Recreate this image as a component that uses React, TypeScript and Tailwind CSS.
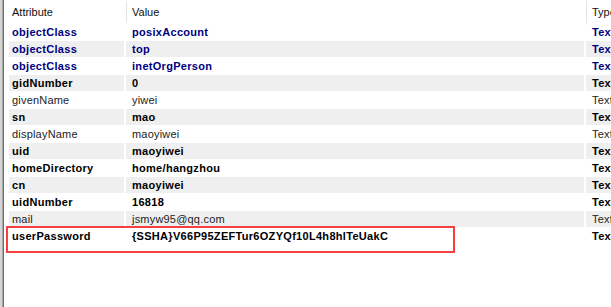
import React from 'react'

type Row = {
  attr: string
  value: string
  kind: 'class' | 'bold' | 'plain'
}

const rows: Row[] = [
  { attr: 'objectClass', value: 'posixAccount', kind: 'class' },
  { attr: 'objectClass', value: 'top', kind: 'class' },
  { attr: 'objectClass', value: 'inetOrgPerson', kind: 'class' },
  { attr: 'gidNumber', value: '0', kind: 'bold' },
  { attr: 'givenName', value: 'yiwei', kind: 'plain' },
  { attr: 'sn', value: 'mao', kind: 'bold' },
  { attr: 'displayName', value: 'maoyiwei', kind: 'plain' },
  { attr: 'uid', value: 'maoyiwei', kind: 'bold' },
  { attr: 'homeDirectory', value: 'home/hangzhou', kind: 'bold' },
  { attr: 'cn', value: 'maoyiwei', kind: 'bold' },
  { attr: 'uidNumber', value: '16818', kind: 'bold' },
  { attr: 'mail', value: 'jsmyw95@qq.com', kind: 'plain' },
  { attr: 'userPassword', value: '{SSHA}V66P95ZEFTur6OZYQf10L4h8hlTeUakC', kind: 'bold' }
]

const textStyle = {
  class: 'font-bold text-[#000080] tracking-[0.3px]',
  bold: 'font-bold text-black tracking-[0.3px]',
  plain: 'font-normal text-[#222] tracking-[0.2px]'
}

export default function App() {
  return (
    <div className="flex h-[307px] w-[611px] overflow-hidden bg-white font-['Liberation_Sans',Arial,sans-serif] text-[11px] leading-none">
      {/* window frame on the left */}
      <div className="w-[2px] shrink-0 bg-[#d6d6d6]" />
      <div className="w-[1px] shrink-0 bg-[#a8a8a8]" />
      <div className="w-[1px] shrink-0 bg-[#6c6c7c]" />

      <div className="relative flex min-w-0 flex-1 flex-col pl-[5px]">
        {/* header */}
        <div className="flex h-[23px] items-stretch pt-[1px] text-[#111]">
          <div className="flex w-[115px] shrink-0 items-center pl-[3px]">Attribute</div>
          <div className="w-[2px] shrink-0" />
          <div className="flex w-[458px] shrink-0 items-center border-l border-[#e3e3e3] pl-[5px]">
            Value
          </div>
          <div className="w-[2px] shrink-0" />
          <div className="flex flex-1 items-center whitespace-nowrap border-l border-[#e3e3e3] pl-[5px]">Type</div>
        </div>

        {rows.map((r, i) => {
          const bg = i % 2 === 1 ? 'bg-[#efefef]' : 'bg-white'
          return (
            <div key={i} className={`flex h-[17px] items-stretch pt-[1px] ${textStyle[r.kind]}`}>
              <div className={`flex w-[115px] shrink-0 items-center pl-[3px] ${bg}`}>{r.attr}</div>
              <div className="w-[2px] shrink-0" />
              <div className={`flex w-[458px] shrink-0 items-center pl-[6px] ${bg}`}>{r.value}</div>
              <div className="w-[2px] shrink-0" />
              <div className={`flex flex-1 items-center overflow-hidden whitespace-nowrap pl-[6px] ${bg}`}>
                Text
              </div>
            </div>
          )
        })}

        {/* red highlight annotation */}
        <div className="pointer-events-none absolute left-[2px] top-[226px] h-[27px] w-[449px] border-2 border-[#f44040]" />
      </div>
    </div>
  )
}
